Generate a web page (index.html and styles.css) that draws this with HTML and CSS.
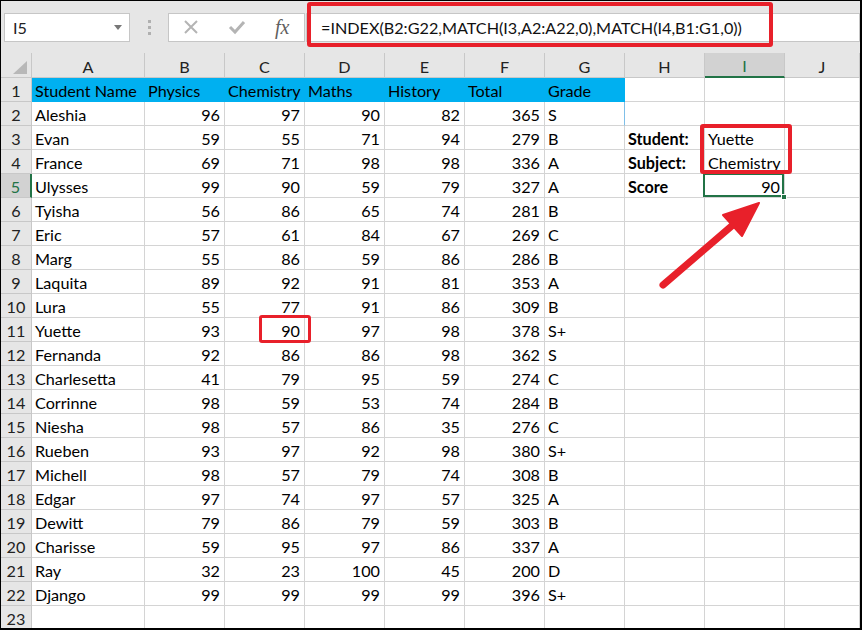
FILE: index.html
```html
<!DOCTYPE html>
<html>
<head>
<meta charset="utf-8">
<link rel="stylesheet" href="styles.css">
</head>
<body>
<div class="frame">
  <div class="fbar">
    <div class="namebox"><span>I5</span><span class="dd"></span></div>
    <div class="dots"><i></i><i></i><i></i></div>
    <div class="fbtns">
      <svg class="ico" width="16" height="16" viewBox="0 0 16 16"><path d="M2 2 L14 14 M14 2 L2 14" stroke="#b4b4b4" stroke-width="2" fill="none"/></svg>
      <svg class="ico" width="18" height="16" viewBox="0 0 18 16"><path d="M2 8 L7 13 L16 3" stroke="#b4b4b4" stroke-width="3" fill="none"/></svg>
      <span class="fx">fx</span>
    </div>
    <div class="finput">=INDEX(B2:G22,MATCH(I3,A2:A22,0),MATCH(I4,B1:G1,0))</div>
  </div>
  <div class="sheet">
    <div class="corner"><span class="tri"></span></div>
    <div class="ch">A</div><div class="ch">B</div><div class="ch">C</div><div class="ch">D</div><div class="ch">E</div><div class="ch">F</div><div class="ch">G</div><div class="ch">H</div><div class="ch selc">I</div><div class="ch">J</div>

    <div class="rh">1</div><div class="c blue">Student Name</div><div class="c blue">Physics</div><div class="c blue">Chemistry</div><div class="c blue">Maths</div><div class="c blue">History</div><div class="c blue">Total</div><div class="c blue">Grade</div><div class="c"></div><div class="c"></div><div class="c"></div>

    <div class="rh">2</div><div class="c">Aleshia</div><div class="c n">96</div><div class="c n">97</div><div class="c n">90</div><div class="c n">82</div><div class="c n">365</div><div class="c gl">S</div><div class="c"></div><div class="c"></div><div class="c"></div>
    <div class="rh">3</div><div class="c">Evan</div><div class="c n">59</div><div class="c n">55</div><div class="c n">71</div><div class="c n">94</div><div class="c n">279</div><div class="c">B</div><div class="c b">Student:</div><div class="c">Yuette</div><div class="c"></div>
    <div class="rh">4</div><div class="c">France</div><div class="c n">69</div><div class="c n">71</div><div class="c n">98</div><div class="c n">98</div><div class="c n">336</div><div class="c">A</div><div class="c b">Subject:</div><div class="c">Chemistry</div><div class="c"></div>
    <div class="rh selr">5</div><div class="c">Ulysses</div><div class="c n">99</div><div class="c n">90</div><div class="c n">59</div><div class="c n">79</div><div class="c n">327</div><div class="c">A</div><div class="c b">Score</div><div class="c n active">90</div><div class="c"></div>
    <div class="rh">6</div><div class="c">Tyisha</div><div class="c n">56</div><div class="c n">86</div><div class="c n">65</div><div class="c n">74</div><div class="c n">281</div><div class="c">B</div><div class="c"></div><div class="c"></div><div class="c"></div>
    <div class="rh">7</div><div class="c">Eric</div><div class="c n">57</div><div class="c n">61</div><div class="c n">84</div><div class="c n">67</div><div class="c n">269</div><div class="c">C</div><div class="c"></div><div class="c"></div><div class="c"></div>
    <div class="rh">8</div><div class="c">Marg</div><div class="c n">55</div><div class="c n">86</div><div class="c n">59</div><div class="c n">86</div><div class="c n">286</div><div class="c">B</div><div class="c"></div><div class="c"></div><div class="c"></div>
    <div class="rh">9</div><div class="c">Laquita</div><div class="c n">89</div><div class="c n">92</div><div class="c n">91</div><div class="c n">81</div><div class="c n">353</div><div class="c">A</div><div class="c"></div><div class="c"></div><div class="c"></div>
    <div class="rh">10</div><div class="c">Lura</div><div class="c n">55</div><div class="c n">77</div><div class="c n">91</div><div class="c n">86</div><div class="c n">309</div><div class="c">B</div><div class="c"></div><div class="c"></div><div class="c"></div>
    <div class="rh">11</div><div class="c">Yuette</div><div class="c n">93</div><div class="c n">90</div><div class="c n">97</div><div class="c n">98</div><div class="c n">378</div><div class="c">S+</div><div class="c"></div><div class="c"></div><div class="c"></div>
    <div class="rh">12</div><div class="c">Fernanda</div><div class="c n">92</div><div class="c n">86</div><div class="c n">86</div><div class="c n">98</div><div class="c n">362</div><div class="c">S</div><div class="c"></div><div class="c"></div><div class="c"></div>
    <div class="rh">13</div><div class="c">Charlesetta</div><div class="c n">41</div><div class="c n">79</div><div class="c n">95</div><div class="c n">59</div><div class="c n">274</div><div class="c">C</div><div class="c"></div><div class="c"></div><div class="c"></div>
    <div class="rh">14</div><div class="c">Corrinne</div><div class="c n">98</div><div class="c n">59</div><div class="c n">53</div><div class="c n">74</div><div class="c n">284</div><div class="c">B</div><div class="c"></div><div class="c"></div><div class="c"></div>
    <div class="rh">15</div><div class="c">Niesha</div><div class="c n">98</div><div class="c n">57</div><div class="c n">86</div><div class="c n">35</div><div class="c n">276</div><div class="c">C</div><div class="c"></div><div class="c"></div><div class="c"></div>
    <div class="rh">16</div><div class="c">Rueben</div><div class="c n">93</div><div class="c n">97</div><div class="c n">92</div><div class="c n">98</div><div class="c n">380</div><div class="c">S+</div><div class="c"></div><div class="c"></div><div class="c"></div>
    <div class="rh">17</div><div class="c">Michell</div><div class="c n">98</div><div class="c n">57</div><div class="c n">79</div><div class="c n">74</div><div class="c n">308</div><div class="c">B</div><div class="c"></div><div class="c"></div><div class="c"></div>
    <div class="rh">18</div><div class="c">Edgar</div><div class="c n">97</div><div class="c n">74</div><div class="c n">97</div><div class="c n">57</div><div class="c n">325</div><div class="c">A</div><div class="c"></div><div class="c"></div><div class="c"></div>
    <div class="rh">19</div><div class="c">Dewitt</div><div class="c n">79</div><div class="c n">86</div><div class="c n">79</div><div class="c n">59</div><div class="c n">303</div><div class="c">B</div><div class="c"></div><div class="c"></div><div class="c"></div>
    <div class="rh">20</div><div class="c">Charisse</div><div class="c n">59</div><div class="c n">95</div><div class="c n">97</div><div class="c n">86</div><div class="c n">337</div><div class="c">A</div><div class="c"></div><div class="c"></div><div class="c"></div>
    <div class="rh">21</div><div class="c">Ray</div><div class="c n">32</div><div class="c n">23</div><div class="c n">100</div><div class="c n">45</div><div class="c n">200</div><div class="c">D</div><div class="c"></div><div class="c"></div><div class="c"></div>
    <div class="rh">22</div><div class="c">Django</div><div class="c n">99</div><div class="c n">99</div><div class="c n">99</div><div class="c n">99</div><div class="c n">396</div><div class="c">S+</div><div class="c"></div><div class="c"></div><div class="c"></div>
    <div class="rh">23</div><div class="c"></div><div class="c"></div><div class="c"></div><div class="c"></div><div class="c"></div><div class="c"></div><div class="c"></div><div class="c"></div><div class="c"></div><div class="c"></div>
  </div>

  <div class="mark mark-formula"></div>
  <div class="mark mark-inputs"></div>
  <div class="mark mark-cell"></div>
  <svg class="arrow" width="862" height="630" viewBox="0 0 862 630">
    <line x1="663" y1="285" x2="734" y2="224" stroke="#e8202a" stroke-width="7" stroke-linecap="round"/>
    <polygon points="759,203 723,215 742,236" fill="#e8202a" stroke="#e8202a" stroke-width="2" stroke-linejoin="round"/>
  </svg>
</div>
</body>
</html>
```
FILE: styles.css
```css
html, body {
  margin: 0;
  padding: 0;
  background: #fff;
}
.frame {
  position: relative;
  width: 862px;
  height: 630px;
  box-sizing: border-box;
  border: 1px solid #000;
  border-right-width: 2px;
  border-bottom-width: 2px;
  overflow: hidden;
  font-family: Lato, "Open Sans", sans-serif;
  font-size: 16.2px;
  color: #000;
}
.fbar {
  height: 52px;
  background: #e6e6e6;
  display: flex;
  align-items: center;
  padding-left: 3px;
}
.namebox {
  width: 126px;
  height: 29px;
  box-sizing: border-box;
  background: #fff;
  border: 1px solid #c6c6c6;
  display: flex;
  align-items: center;
  justify-content: space-between;
  padding: 1px 7px 0 8px;
  color: #222;
}
.dd {
  width: 0;
  height: 0;
  border-left: 4px solid transparent;
  border-right: 4px solid transparent;
  border-top: 5px solid #777;
}
.dots {
  width: 38px;
  display: flex;
  flex-direction: column;
  align-items: center;
  gap: 3px;
}
.dots i {
  display: block;
  width: 3px;
  height: 3px;
  background: #b0b0b0;
}
.fbtns {
  width: 137px;
  height: 29px;
  box-sizing: border-box;
  background: #fff;
  border: 1px solid #c6c6c6;
  display: flex;
  align-items: center;
  gap: 29px;
  padding-left: 14px;
}
.fx {
  font-family: "Liberation Serif", serif;
  font-style: italic;
  font-size: 20px;
  color: #606060;
  margin-left: 0;
}
.finput {
  flex: 1;
  height: 29px;
  box-sizing: border-box;
  background: #fff;
  border: 1px solid #c6c6c6;
  margin-left: 1px;
  display: flex;
  align-items: center;
  padding: 1px 0 0 14px;
  color: #111;
}
.sheet {
  display: grid;
  grid-template-columns: 31px 113px repeat(8, 80px) 1fr;
  grid-auto-rows: 24px;
  grid-template-rows: 25px;
}
.corner, .ch, .rh {
  background: #e6e6e6;
  box-sizing: border-box;
  border-right: 1px solid #c8c8c8;
  border-bottom: 1px solid #c8c8c8;
  color: #222;
}
.corner {
  position: relative;
}
.tri {
  position: absolute;
  right: 4px;
  bottom: 3px;
  width: 0;
  height: 0;
  border-left: 14px solid transparent;
  border-bottom: 13px solid #b8b8b8;
}
.ch {
  display: flex;
  align-items: center;
  justify-content: center;
  padding-top: 2px;
}
.ch.selc {
  background: #d2d2d2;
  color: #217346;
  border-bottom: 2px solid #217346;
}
.rh {
  display: flex;
  align-items: center;
  justify-content: center;
  padding-top: 2px;
}
.rh.selr {
  background: #d2d2d2;
  color: #217346;
  border-right: 2px solid #217346;
}
.c {
  box-sizing: border-box;
  border-right: 1px solid #d4d4d4;
  border-bottom: 1px solid #d4d4d4;
  padding: 2px 3px 0 3px;
  line-height: 21px;
  white-space: nowrap;
  overflow: visible;
}
.c.n {
  text-align: right;
  padding-right: 4px;
}
.c.b {
  font-weight: bold;
}
.c.blue {
  background: #00b0f0;
  border-right-color: #00b0f0;
  border-bottom-color: #00b0f0;
}
.c.gl {
  border-right-color: #7fbfe8;
}
.c.active {
  position: relative;
}
.c.active::after {
  content: "";
  position: absolute;
  left: -2px;
  top: -1px;
  right: 0;
  bottom: 0;
  border: 2px solid #217346;
}
.c.active::before {
  content: "";
  position: absolute;
  right: -3px;
  bottom: -3px;
  width: 6px;
  height: 6px;
  background: #217346;
  border: 1px solid #fff;
  box-sizing: border-box;
  z-index: 2;
}
.mark {
  position: absolute;
  box-sizing: border-box;
  border: 4px solid #e8202a;
  border-radius: 3px;
}
.mark-formula {
  left: 306px;
  top: 1px;
  width: 466px;
  height: 45px;
}
.mark-inputs {
  left: 699px;
  top: 123px;
  width: 92px;
  height: 50px;
}
.mark-cell {
  left: 258px;
  top: 314px;
  width: 52px;
  height: 28px;
  border-width: 3.5px;
}
.arrow {
  position: absolute;
  left: -1px;
  top: -1px;
  pointer-events: none;
}
```
